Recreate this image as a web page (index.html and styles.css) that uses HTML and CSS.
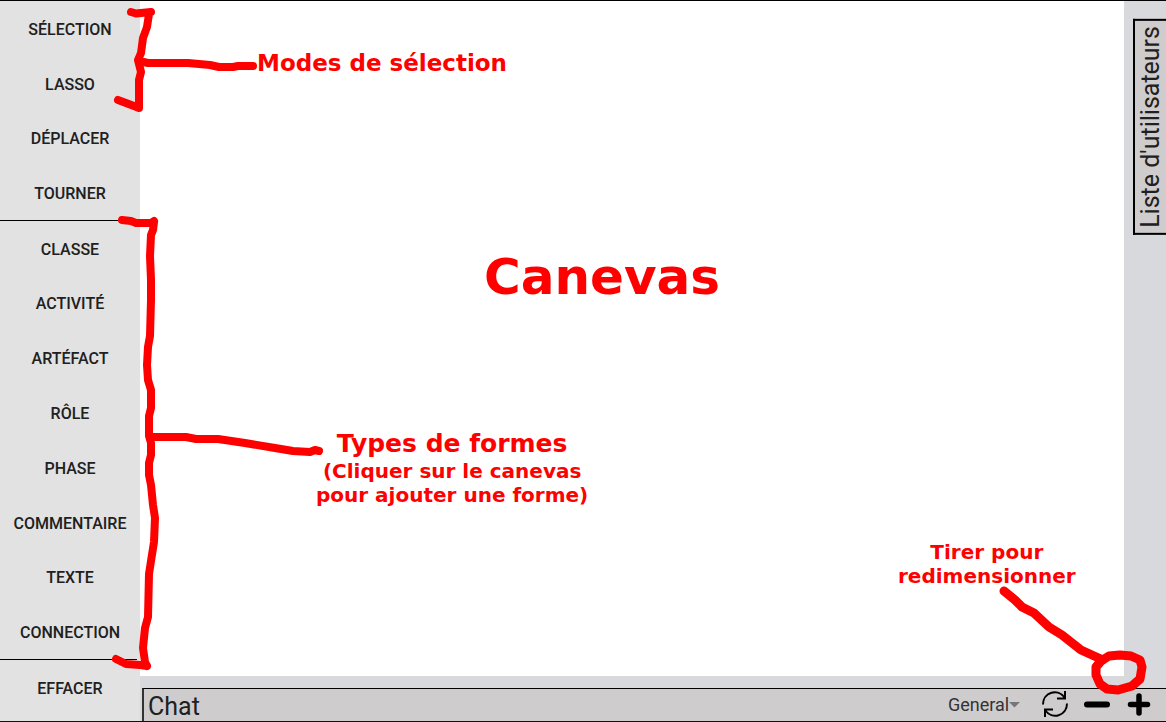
FILE: index.html
```
<!DOCTYPE html>
<html lang="fr">
<head>
<meta charset="utf-8">
<meta name="viewport" content="width=device-width, initial-scale=1">
<title>Canevas</title>
<link rel="stylesheet" href="styles.css">
</head>
<body>
<div class="app">
  <nav class="tools" aria-label="Outils">
    <div class="tool-group modes">
      <button type="button" class="tool">SÉLECTION</button>
      <button type="button" class="tool">LASSO</button>
      <button type="button" class="tool">DÉPLACER</button>
      <button type="button" class="tool">TOURNER</button>
    </div>
    <div class="tool-group shapes">
      <button type="button" class="tool">CLASSE</button>
      <button type="button" class="tool">ACTIVITÉ</button>
      <button type="button" class="tool">ARTÉFACT</button>
      <button type="button" class="tool">RÔLE</button>
      <button type="button" class="tool">PHASE</button>
      <button type="button" class="tool">COMMENTAIRE</button>
      <button type="button" class="tool">TEXTE</button>
      <button type="button" class="tool">CONNECTION</button>
    </div>
    <div class="tool-group erase">
      <button type="button" class="tool">EFFACER</button>
    </div>
  </nav>
  <div class="workspace">
    <div class="board">
      <main class="canvas"></main>
      <aside class="side">
        <button type="button" class="users-tab">Liste d'utilisateurs</button>
      </aside>
    </div>
    <footer class="chat">
      <h2 class="chat-title">Chat</h2>
      <div class="room">
        <select class="room-select" aria-label="Salon"><option>General</option></select>
        <svg class="room-arrow" width="12" height="6" viewBox="0 0 12 6" aria-hidden="true"><path d="M0 0H11L5.500 5.500Z"/></svg>
      </div>
      <button type="button" class="icon-button" aria-label="Actualiser">
        <svg width="28" height="28" viewBox="0 0 28 28" fill="none" stroke="#000" stroke-width="2"><path d="M2 13.500C2 1 17-3 24 7M16 7.500L24 7.500V0M26 12.500C26 25 11 29 4 19M12 18.500L4 18.500V26"/></svg>
      </button>
      <button type="button" class="icon-button" aria-label="Réduire">
        <svg width="28" height="28" viewBox="0 0 28 28" stroke="#000" stroke-width="6" stroke-linecap="round"><path d="M4 13.500H24"/></svg>
      </button>
      <button type="button" class="icon-button" aria-label="Agrandir">
        <svg width="28" height="28" viewBox="0 0 28 28" stroke="#000" stroke-width="5.500" stroke-linecap="round"><path d="M5.500 13.500H22.500M14 5V22"/></svg>
      </button>
    </footer>
  </div>
  <svg class="ink" width="1166" height="722" viewBox="0 0 1166 722" aria-hidden="true">
    <path d="M131 12L136 13.500L151 12M149 14L147 27L143 38L141 53L138 60L141 72L139 80V108L134 106L118 100M139 61L148 63H188L210 65L219 67H233L238 66H253"/>
    <path d="M122 220L131 221L136 223H151L154 221M154 222L153 230L151 235L150 256L151 280L151 300L150 336L148 347L147 365L148 380L151 390V408L149 416L149 436L151 443V455L149 463L149 475L151 485L153 505L155 518L154 542L151 561L149 574L148 617L145 628L143 648L145 662L147 666M147 666L140 665L126 664L122 662L116 659M150 437H186L196 439L218 439L245 443L275 448L293 451L310 452L315 450L319 451"/>
    <path class="broad" d="M1004 591L1015 600L1022 607L1034 613L1049 627L1062 635L1081 650L1103 660M1101 661L1096 667V675L1100 684L1107 689L1118 690L1132 686L1140 679L1142 667L1140 660L1131 656L1120 655L1109 656L1101 661"/>
  </svg>
  <p class="note note-modes">Modes de sélection</p>
  <p class="note note-canvas">Canevas</p>
  <div class="note note-shapes">
    <p class="note-heading">Types de formes</p>
    <p class="note-detail">(Cliquer sur le canevas<br>pour ajouter une forme)</p>
  </div>
  <p class="note note-detail note-resize">Tirer pour<br>redimensionner</p>
</div>
</body>
</html>
```
FILE: styles.css
```
* { box-sizing: border-box; }

body, p, h2 { margin: 0; }

button, select {
  margin: 0;
  padding: 0;
  border: 0;
  background: none;
  color: inherit;
  font: inherit;
}

.app {
  position: relative;
  display: flex;
  min-height: 100vh;
  border-top: 1px solid #000;
  border-bottom: 1px solid #111;
  overflow: hidden;
  color: #202020;
  font-family: Roboto, sans-serif;
}

.tools {
  display: flex;
  flex-direction: column;
  flex: none;
  width: 140px;
  padding-bottom: 6px;
  background: #e2e2e2;
}

.tool-group { display: flex; flex-direction: column; }
.modes { flex: 4; }
.shapes { flex: 8; }
.erase { flex: 1; }

.modes::after, .shapes::after {
  content: "";
  height: 1px;
  margin-right: 3px;
  background: #000;
}

.tool {
  flex: 1;
  padding-top: 2px;
  font-size: 16px;
  font-weight: 500;
}

.workspace {
  display: flex;
  flex: 1;
  flex-direction: column;
  min-width: 0;
  background: #d8d9dd;
}

.board { display: flex; flex: 1; }

.canvas {
  flex: 1;
  margin-bottom: 12px;
  background: #fff;
}

.side {
  display: flex;
  align-items: flex-start;
  justify-content: flex-end;
  width: 42px;
  padding-top: 18px;
}

.users-tab {
  padding: 5px 4px 5px 3px;
  border: 2px solid #000;
  border-left: 0;
  background: #cfcccd;
  font-size: 25px;
  line-height: 24px;
  white-space: nowrap;
  writing-mode: vertical-rl;
  transform: rotate(180deg);
}

.chat {
  display: flex;
  align-items: center;
  gap: 14px;
  height: 33px;
  margin-left: 2px;
  padding: 0 13px 0 4px;
  border-top: 1px solid #000;
  border-left: 2px solid #333;
  background: #cfcccd;
}

.chat-title {
  flex: 1;
  padding-top: 3px;
  font-size: 25px;
  font-weight: 400;
  line-height: 32px;
}

.room { display: flex; align-items: center; margin-right: 6px; }

.room-select {
  appearance: none;
  width: 62px;
  padding-bottom: 2px;
  color: #333;
  font-size: 18px;
}

.room-arrow { margin-left: -1px; fill: #777; }

.icon-button { display: flex; }

.ink {
  position: absolute;
  top: -1px;
  left: 0;
  fill: none;
  stroke: #f00;
  stroke-width: 8;
  stroke-linecap: round;
  stroke-linejoin: round;
  pointer-events: none;
}

.broad { stroke-width: 9; }

.note {
  position: absolute;
  color: #f00;
  font-family: "DejaVu Sans", sans-serif;
  font-weight: 700;
  text-align: center;
  white-space: nowrap;
}

.note-modes { top: 47px; left: 257px; font-size: 23px; line-height: 30px; }
.note-canvas { top: 246px; left: 484px; font-size: 50px; line-height: 60px; }
.note-shapes { top: 428px; left: 316px; }
.note-heading { font-size: 25px; line-height: 30px; }
.note-detail { font-size: 20px; line-height: 24px; }
.note-resize { top: 539px; left: 898px; }
```
